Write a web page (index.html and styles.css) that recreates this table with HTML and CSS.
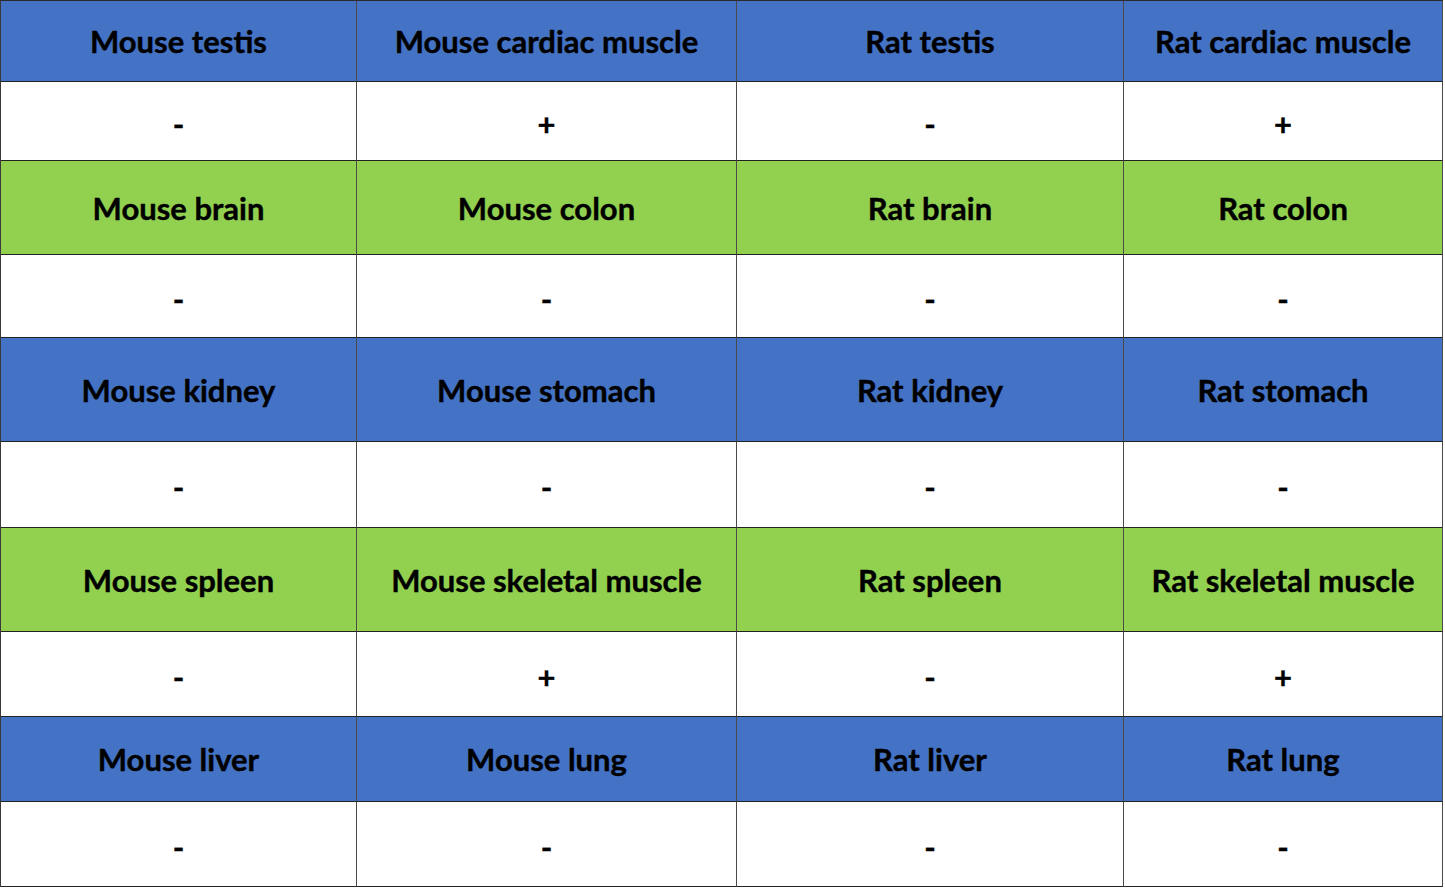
FILE: index.html
```html
<!DOCTYPE html>
<html lang="en">
<head>
<meta charset="utf-8">
<title>Tissue expression</title>
<link rel="stylesheet" href="styles.css">
</head>
<body>
<div class="grid">
  <div class="cell blue">Mouse testis</div>
  <div class="cell blue">Mouse cardiac muscle</div>
  <div class="cell blue">Rat testis</div>
  <div class="cell blue">Rat cardiac muscle</div>
  <div class="cell val">-</div>
  <div class="cell val">+</div>
  <div class="cell val">-</div>
  <div class="cell val">+</div>

  <div class="cell green">Mouse brain</div>
  <div class="cell green">Mouse colon</div>
  <div class="cell green">Rat brain</div>
  <div class="cell green">Rat colon</div>
  <div class="cell val">-</div>
  <div class="cell val">-</div>
  <div class="cell val">-</div>
  <div class="cell val">-</div>

  <div class="cell blue">Mouse kidney</div>
  <div class="cell blue">Mouse stomach</div>
  <div class="cell blue">Rat kidney</div>
  <div class="cell blue">Rat stomach</div>
  <div class="cell val">-</div>
  <div class="cell val">-</div>
  <div class="cell val">-</div>
  <div class="cell val">-</div>

  <div class="cell green">Mouse spleen</div>
  <div class="cell green">Mouse skeletal muscle</div>
  <div class="cell green">Rat spleen</div>
  <div class="cell green">Rat skeletal muscle</div>
  <div class="cell val">-</div>
  <div class="cell val">+</div>
  <div class="cell val">-</div>
  <div class="cell val">+</div>

  <div class="cell blue">Mouse liver</div>
  <div class="cell blue">Mouse lung</div>
  <div class="cell blue">Rat liver</div>
  <div class="cell blue">Rat lung</div>
  <div class="cell val">-</div>
  <div class="cell val">-</div>
  <div class="cell val">-</div>
  <div class="cell val">-</div>
</div>
</body>
</html>
```

FILE: styles.css
```css
html, body {
  margin: 0;
  padding: 0;
  background: #ffffff;
}

.grid {
  display: grid;
  width: 1443px;
  box-sizing: border-box;
  grid-template-columns: 356px 380px 387px 319px;
  grid-template-rows: 81px 79px 94px 83px 104px 86px 104px 85px 85px 85px;
  border-top: 1px solid #2a2a2a;
  border-left: 1px solid #3a3a3a;
  font-family: Lato, "Liberation Sans", sans-serif;
  font-weight: 700;
  font-size: 31px;
  -webkit-text-stroke: 0.4px #000;
  color: #000;
}

.cell {
  box-sizing: border-box;
  display: flex;
  align-items: center;
  justify-content: center;
  border-right: 1px solid #4a4a4a;
  border-bottom: 1px solid #222;
  white-space: nowrap;
}

.blue {
  background: #4472c4;
}

.green {
  background: #92d050;
}

.val {
  background: #ffffff;
  padding-top: 5px;
}
```
